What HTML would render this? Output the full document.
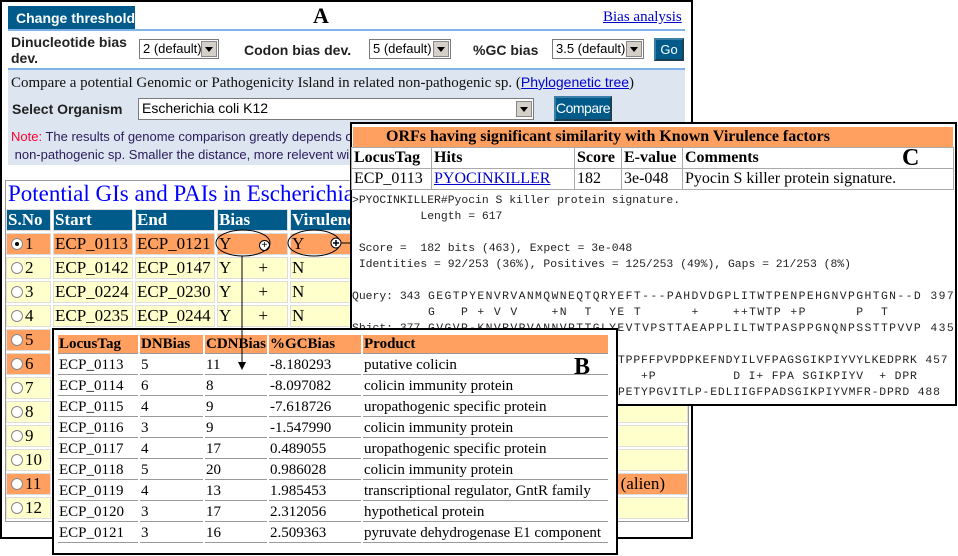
<!DOCTYPE html>
<html><head><meta charset="utf-8"><style>
*{margin:0;padding:0;box-sizing:border-box}
body{width:958px;height:556px;background:#fff;position:relative;overflow:hidden;font-family:"Liberation Serif",serif}
.a{position:absolute}
.sans{font-family:"Liberation Sans",sans-serif}
.sel{position:absolute;height:20px;border:1px solid #7a7a7a;background:#fff;font:13px "Liberation Sans",sans-serif;padding:1px 3px;color:#000;white-space:nowrap;overflow:hidden}
.sel i{position:absolute;right:1px;top:1px;width:16px;height:16px;background:#d4d0c8;border:1px solid #888}
.sel i:after{content:"";position:absolute;left:3px;top:5px;border:4px solid transparent;border-top:5px solid #000}
.btn{position:absolute;background:#005b8a;color:#fff;font:13px "Liberation Sans",sans-serif;border:2px outset #3a7fa8;text-align:center;white-space:nowrap}
table{border-collapse:separate;border-spacing:2px}
.ta td{font-size:17px;height:22px;padding:0 1px;white-space:nowrap;border:1px solid #ddd}
.th td{background:#005b8a;color:#fff;font-weight:bold}
.y td{background:#ffffcc}
.o td{background:#ffa060}
.rad{display:inline-block;width:12px;height:12px;border-radius:50%;background:#fff;border:1px solid #888;vertical-align:-1px;margin:0 2px 0 3px;position:relative}
.rad.on:after{content:"";position:absolute;left:3px;top:3px;width:4px;height:4px;border-radius:50%;background:#000}
.tb td{font-size:15px;height:19px;line-height:18px;padding:0 1px;border-bottom:1px solid #999;white-space:nowrap}
.tc td{font-size:16px;padding:0 2px;white-space:nowrap}
.m{position:absolute;font-family:"Liberation Mono",monospace;font-size:11.4px;line-height:16px;color:#222;white-space:pre}
.s{letter-spacing:1.4px}
.pl{display:inline-block;width:11px;height:11px;border-radius:50%;background:#fff;border:1px solid #000;font-size:11px;line-height:9px;text-align:center;font-weight:bold;vertical-align:1px}
</style></head><body>
<!-- Panel A -->
<div class="a" style="left:0;top:0;width:693px;height:539px;border:2px solid #000;background:#fff"></div>
<div class="a sans" style="left:8px;top:6px;width:127px;height:24px;background:#005b8a;color:#fff;font-weight:bold;font-size:14px;line-height:24px;padding-left:8px">Change threshold</div>
<div class="a" style="left:8px;top:29px;width:677px;height:2px;background:#7fb4e8"></div>
<div class="a" style="left:313px;top:3px;font-size:22px;font-weight:bold">A</div>
<div class="a" style="left:603px;top:9px;font-size:15px;color:#0000cc;text-decoration:underline">Bias analysis</div>
<div class="a sans" style="left:11px;top:34px;font-size:14px;line-height:16px;font-weight:bold;color:#222">Dinucleotide bias<br>dev.</div>
<div class="sel" style="left:139px;top:39px;width:80px">2 (default)<i></i></div>
<div class="a sans" style="left:244px;top:42px;font-size:14px;font-weight:bold;color:#222">Codon bias dev.</div>
<div class="sel" style="left:369px;top:39px;width:82px">5 (default)<i></i></div>
<div class="a sans" style="left:473px;top:42px;font-size:14px;font-weight:bold;color:#222">%GC bias</div>
<div class="sel" style="left:552px;top:39px;width:92px">3.5 (default)<i></i></div>
<div class="btn" style="left:654px;top:38px;width:30px;height:23px;line-height:19px">Go</div>
<div class="a" style="left:8px;top:68px;width:677px;height:2px;background:#7fb4e8"></div>
<div class="a" style="left:8px;top:70px;width:677px;height:95px;background:#dde6f0"></div>
<div class="a" style="left:11px;top:74px;font-size:15px;color:#111;white-space:nowrap">Compare a potential Genomic or Pathogenicity Island in related non-pathogenic sp. (<span style="color:#0000cc;text-decoration:underline;font-family:'Liberation Sans',sans-serif;font-size:14px">Phylogenetic tree</span>)</div>
<div class="a sans" style="left:12px;top:101px;font-size:14px;font-weight:bold;color:#222">Select Organism</div>
<div class="sel" style="left:138px;top:98px;width:396px;height:22px;font-size:14px">Escherichia coli K12<i style="top:2px"></i></div>
<div class="btn" style="left:554px;top:96px;width:58px;height:25px;line-height:21px;font-size:14px;letter-spacing:-0.5px">Compare</div>
<div class="a sans" style="left:11px;top:128px;font-size:13px;line-height:18px;color:#2a1a5a;white-space:nowrap"><span style="color:#f03">Note:</span> The results of genome comparison greatly depends on<br>&nbsp;non-pathogenic sp. Smaller the distance, more relevent will</div>
<div class="a" style="left:5px;top:180px;width:684px;height:342px;border:1px solid #999"></div>
<div class="a" style="left:8px;top:181px;font-size:23px;color:#0000ff;white-space:nowrap">Potential GIs and PAIs in Escherichia coli</div>
<table class="a ta" style="left:4px;top:207px;width:686px">
<tr class="th"><td style="width:45px">S.No</td><td style="width:80px">Start</td><td style="width:80px">End</td><td style="width:71px">Bias</td><td>Virulence</td></tr>
<tr class="o"><td><span class="rad on"></span>1</td><td>ECP_0113</td><td>ECP_0121</td><td>Y<span style="float:right;margin-right:16px"><span class="pl">+</span></span></td><td>Y</td></tr>
<tr class="y"><td><span class="rad"></span>2</td><td>ECP_0142</td><td>ECP_0147</td><td>Y<span style="float:right;margin-right:18px">+</span></td><td>N</td></tr>
<tr class="y"><td><span class="rad"></span>3</td><td>ECP_0224</td><td>ECP_0230</td><td>Y<span style="float:right;margin-right:18px">+</span></td><td>N</td></tr>
<tr class="y"><td><span class="rad"></span>4</td><td>ECP_0235</td><td>ECP_0244</td><td>Y<span style="float:right;margin-right:18px">+</span></td><td>N</td></tr>
<tr class="o"><td><span class="rad"></span>5</td><td></td><td></td><td></td><td></td></tr>
<tr class="o"><td><span class="rad"></span>6</td><td></td><td></td><td></td><td></td></tr>
<tr class="y"><td><span class="rad"></span>7</td><td></td><td></td><td></td><td></td></tr>
<tr class="y"><td><span class="rad"></span>8</td><td></td><td></td><td></td><td></td></tr>
<tr class="y"><td><span class="rad"></span>9</td><td></td><td></td><td></td><td></td></tr>
<tr class="y"><td><span class="rad"></span>10</td><td></td><td></td><td></td><td></td></tr>
<tr class="o"><td><span class="rad"></span>11</td><td></td><td></td><td></td><td style="text-align:right;padding-right:22px">d (alien)</td></tr>
<tr class="y"><td><span class="rad"></span>12</td><td></td><td></td><td></td><td></td></tr>
</table>
<svg class="a" style="left:0;top:0" width="958" height="556">
<ellipse cx="243" cy="243" rx="27" ry="13" fill="none" stroke="#000" stroke-width="1"/>
<ellipse cx="314" cy="243" rx="26" ry="13" fill="none" stroke="#000" stroke-width="1"/>
<circle cx="336" cy="243" r="5" fill="#fff" stroke="#000"/>
<line x1="333" y1="243" x2="339" y2="243" stroke="#000" stroke-width="1.5"/>
<line x1="336" y1="240" x2="336" y2="246" stroke="#000" stroke-width="1.5"/>
<line x1="341" y1="243" x2="405" y2="243" stroke="#000"/>
<polygon points="412,243 403,239 403,247" fill="#000"/>
</svg>
<!-- Panel C -->
<div class="a" style="left:350px;top:122px;width:607px;height:284px;border:2px solid #000;background:#fff"></div>
<div class="a" style="left:353px;top:127px;width:600px;height:20px;background:#ffa060;font-weight:bold;font-size:16px;text-align:center;line-height:20px;padding-right:90px">ORFs having significant similarity with Known Virulence factors</div>
<table class="a tc" style="left:351px;top:147px;width:603px;border-spacing:1px;background:#aaa">
<tr style="background:#fff;height:20px"><td style="width:79px;font-weight:bold">LocusTag</td><td style="width:142px;font-weight:bold">Hits</td><td style="width:46px;font-weight:bold">Score</td><td style="width:60px;font-weight:bold">E-value</td><td style="font-weight:bold">Comments</td></tr>
<tr style="background:#fff;height:20px"><td>ECP_0113</td><td style="color:#0000cc;text-decoration:underline">PYOCINKILLER</td><td>182</td><td>3e-048</td><td>Pyocin S killer protein signature.</td></tr>
</table>
<div class="a" style="left:902px;top:145px;font-size:24px;font-weight:bold">C</div>
<div class="m" style="left:352px;top:193px">&gt;PYOCINKILLER#Pyocin S killer protein signature.
          Length = 617

 Score =  182 bits (463), Expect = 3e-048
 Identities = 92/253 (36%), Positives = 125/253 (49%), Gaps = 21/253 (8%)

Query: 343
           
Sbjct: 377</div>
<div class="m s" style="left:428px;top:289px">GEGTPYENVRVANMQWNEQTQRYEFT---PAHDVDGPLITWTPENPEHGNVPGHTGN--D 397
G   P + V V    +N  T  YE T      +    ++TWTP +P      P  T
GVGVP-KNVRVPVANNVPTTGLYEVTVPSTTAEAPPLILTWTPASPPGNQNPSSTTPVVP 435</div>
<div class="m" style="left:618px;top:353px;letter-spacing:0.85px">TPPFFPVPDPKEFNDYILVFPAGSGIKPIYVYLKEDPRK 457
   +P          D I+ FPA SGIKPIYV  + DPR
PETYPGVITLP-EDLIIGFPADSGIKPIYVMFR-DPRD 488</div>
<!-- Panel B -->
<div class="a" style="left:52px;top:328px;width:566px;height:227px;border:2px solid #000;background:#fff"></div>
<table class="a tb" style="left:56px;top:333px;width:554px;border-spacing:2px">
<tr style="background:#ffa060;font-weight:bold"><td style="width:80px">LocusTag</td><td style="width:63px">DNBias</td><td style="width:61px">CDNBias</td><td style="width:92px">%GCBias</td><td>Product</td></tr>
<tr><td>ECP_0113</td><td>5</td><td>11</td><td>-8.180293</td><td>putative colicin</td></tr>
<tr><td>ECP_0114</td><td>6</td><td>8</td><td>-8.097082</td><td>colicin immunity protein</td></tr>
<tr><td>ECP_0115</td><td>4</td><td>9</td><td>-7.618726</td><td>uropathogenic specific protein</td></tr>
<tr><td>ECP_0116</td><td>3</td><td>9</td><td>-1.547990</td><td>colicin immunity protein</td></tr>
<tr><td>ECP_0117</td><td>4</td><td>17</td><td>0.489055</td><td>uropathogenic specific protein</td></tr>
<tr><td>ECP_0118</td><td>5</td><td>20</td><td>0.986028</td><td>colicin immunity protein</td></tr>
<tr><td>ECP_0119</td><td>4</td><td>13</td><td>1.985453</td><td>transcriptional regulator, GntR family</td></tr>
<tr><td>ECP_0120</td><td>3</td><td>17</td><td>2.312056</td><td>hypothetical protein</td></tr>
<tr><td>ECP_0121</td><td>3</td><td>16</td><td>2.509363</td><td>pyruvate dehydrogenase E1 component</td></tr>
</table>
<div class="a" style="left:574px;top:354px;font-size:24px;font-weight:bold">B</div>
<svg class="a" style="left:0;top:0" width="958" height="556">
<line x1="242" y1="256" x2="242" y2="362" stroke="#000"/>
<polygon points="242,370 238,362 246,362" fill="#000"/></svg>
</body></html>
